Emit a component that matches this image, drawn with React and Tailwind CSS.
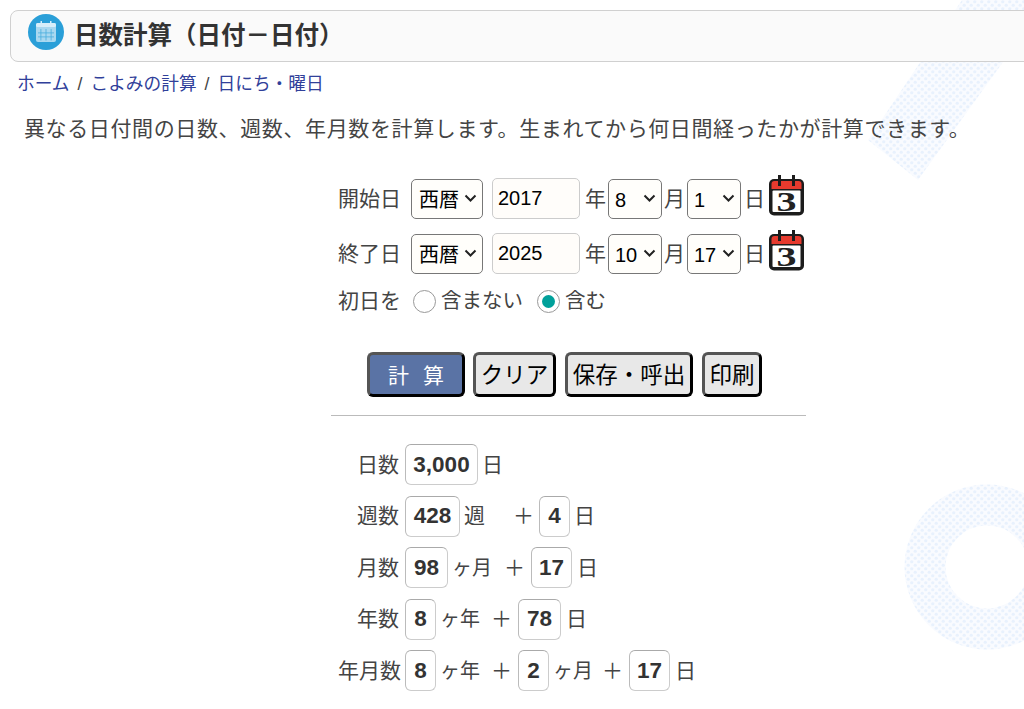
import React from "react";

const CalendarIcon = () => (
  <svg width="37" height="41" viewBox="0 0 37 41" className="shrink-0">
    <rect x="1" y="4" width="35" height="36.500" rx="5" fill="#1c1c1c" />
    <path d="M3.500 14V9a3 3 0 0 1 3-3h24a3 3 0 0 1 3 3v5z" fill="#e63a2e" />
    <rect x="4.500" y="15.500" width="28" height="21.500" rx="1" fill="#fff" />
    <rect x="10" y="0" width="3" height="11" fill="#1c1c1c" />
    <rect x="24" y="0" width="3" height="11" fill="#1c1c1c" />
    <text x="18.500" y="35.500" textAnchor="middle" fontSize="27" fontWeight="700" fill="#222" textLength="20" lengthAdjust="spacingAndGlyphs" fontFamily="'Liberation Serif', serif">3</text>
  </svg>
);

const TitleIcon = () => (
  <svg width="36" height="36" viewBox="0 0 36 36" className="shrink-0">
    <circle cx="18" cy="18" r="18" fill="#2a9fd8" />
    <rect x="8" y="9" width="20" height="19" rx="2" fill="#a9d8f0" />
    <rect x="8" y="9" width="20" height="4" rx="1.500" fill="#d7eefa" />
    <g fill="#2a9fd8" opacity="0.75">
      <rect x="12.500" y="15" width="0.800" height="11.500" />
      <rect x="17.600" y="15" width="0.800" height="11.500" />
      <rect x="22.700" y="15" width="0.800" height="11.500" />
      <rect x="10" y="18.500" width="16" height="0.800" />
      <rect x="10" y="22.500" width="16" height="0.800" />
    </g>
    <rect x="12.500" y="7" width="1.500" height="4" fill="#d7eefa" />
    <rect x="22" y="7" width="1.500" height="4" fill="#d7eefa" />
  </svg>
);

const Background = () => (
  <svg className="absolute inset-0" width="1024" height="709">
    <defs>
      <pattern id="dots" width="7" height="7" patternUnits="userSpaceOnUse">
        <rect width="7" height="7" fill="#f9fbff" />
        <circle cx="1.750" cy="1.750" r="1.600" fill="#e8f1fd" />
        <circle cx="5.250" cy="5.250" r="1.600" fill="#e8f1fd" />
      </pattern>
    </defs>
    <polygon points="962,0 868,140 918,180 1024,33 1024,0" fill="url(#dots)" />
    <circle cx="987" cy="567" r="62" fill="none" stroke="url(#dots)" strokeWidth="41" />
  </svg>
);

const DateSelect = ({ value, options, className }) => (
  <div className="relative">
    <select
      defaultValue={value}
      className={`block h-[40px] appearance-none rounded-[5px] border border-[#777] bg-[#fffefb] text-[20px] text-black ${className}`}
    >
      {options.map((o) => (
        <option key={o}>{o}</option>
      ))}
    </select>
    <svg width="13" height="8" viewBox="0 0 13 8" className="pointer-events-none absolute right-[6px] top-[15px]">
      <path d="M1.500 1.500 6.500 6.500 11.500 1.500" fill="none" stroke="#222" strokeWidth="2" />
    </svg>
  </div>
);

const DateRow = ({ label, year, month, day, className }) => (
  <div className={`flex items-center h-[41px] ${className}`}>
    <span className="w-[73px]">{label}</span>
    <DateSelect value="西暦" options={["西暦", "和暦"]} className="w-[72px] pl-[7px] pt-[3px]" />
    <input
      defaultValue={year}
      className="ml-[9px] h-[41px] w-[88px] rounded-[5px] border border-[#ccc] bg-[#fffdfa] pl-[5px] text-[20px] text-black outline-none"
    />
    <span className="ml-[5px] w-[23px]">年</span>
    <DateSelect value={month} options={[month]} className="w-[54px] pl-[6px] pt-[2px]" />
    <span className="ml-[2px] w-[23px]">月</span>
    <DateSelect value={day} options={[day]} className="w-[54px] pl-[6px] pt-[2px]" />
    <span className="ml-[3px] w-[24px]">日</span>
    <div className="-mt-[6px]">
      <CalendarIcon />
    </div>
  </div>
);

const Radio = ({ checked, label, className }) => (
  <div className={`flex items-center ${className}`}>
    <span className="flex size-[23px] items-center justify-center rounded-full border border-[#999] bg-white">
      {checked && <span className="size-[13px] rounded-full bg-[#00a09a]" />}
    </span>
    <span className="ml-[5px] text-[20.500px]">{label}</span>
  </div>
);

const Btn = ({ children, primary, className }) => (
  <button
    className={`h-[45px] rounded-[6px] border-[3px] border-t-[#555] border-l-[#555] border-r-black border-b-black leading-none ${
      primary ? "bg-[#5a73a5] text-white" : "bg-[#e8e8e8] text-black"
    } ${className}`}
  >
    {children}
  </button>
);

const Val = ({ children, className }) => (
  <span
    className={`flex h-[41px] items-center justify-center rounded-[6px] border border-[#ccc] border-t-[#aaa] border-l-[#bbb] bg-white text-[22.500px] font-bold text-[#333] ${className}`}
  >
    {children}
  </span>
);

const Result = ({ label, children }) => (
  <div className="flex h-[41px] items-center mb-[10.500px]">
    <span className="w-[61px] text-right whitespace-nowrap">{label}</span>
    <div className="ml-[6px] flex items-center">{children}</div>
  </div>
);

const Unit = ({ children }) => <span className="ml-[4px] text-[20px]">{children}</span>;

export default function App() {
  return (
    <div className="relative h-[709px] overflow-hidden bg-white text-[21px] text-[#444] [font-family:'Liberation_Sans','Noto_Sans_CJK_JP',sans-serif]">
      <Background />
      <div className="relative">
        <div className="ml-[10px] mt-[10px] flex h-[52px] w-[1030px] items-center rounded-[8px] border border-[#d0d0d0] bg-[#fafafa] pl-[17px]">
          <div className="-mt-[9px]">
            <TitleIcon />
          </div>
          <h1 className="ml-[10px] text-[24.500px] font-bold leading-none text-[#333]">日数計算（日付－日付）</h1>
        </div>

        <div className="ml-[17px] mt-[11px] flex h-[22px] items-center text-[17.700px] text-[#30409a]">
          <a>ホーム</a>
          <span className="mx-[8px] text-[#444]">/</span>
          <a>こよみの計算</a>
          <span className="mx-[8px] text-[#444]">/</span>
          <a>日にち・曜日</a>
        </div>

        <p className="ml-[24px] mt-[20px] h-[28px] leading-[28px] tracking-[0.620px] whitespace-nowrap">
          異なる日付間の日数、週数、年月数を計算します。生まれてから何日間経ったかが計算できます。
        </p>

        <div className="ml-[338px] mt-[35px] w-[490px]">
          <DateRow label="開始日" year="2017" month="8" day="1" />
          <DateRow label="終了日" year="2025" month="10" day="17" className="mt-[14px]" />
          <div className="mt-[7px] flex h-[40px] items-center">
            <span className="w-[75px]">初日を</span>
            <Radio label="含まない" />
            <Radio checked label="含む" className="ml-[14px]" />
          </div>

          <div className="mt-[31px] ml-[29px] flex">
            <Btn primary className="w-[98px] pl-[14px] pt-[1px] text-[21px] tracking-[14px]">計算</Btn>
            <Btn className="ml-[8px] w-[83px] pt-[3px] text-[22.500px]">クリア</Btn>
            <Btn className="ml-[9px] w-[128px] pt-[3px] text-[22.500px]">保存・呼出</Btn>
            <Btn className="ml-[9px] w-[60px] pt-[3px] text-[22.500px]">印刷</Btn>
          </div>

          <hr className="-ml-[7px] mt-[18px] w-[475px] border-t border-[#bbb]" />

          <div className="mt-[28px]">
            <Result label="日数">
              <Val className="w-[73px]">3,000</Val>
              <span className="ml-[4px]">日</span>
            </Result>
            <Result label="週数">
              <Val className="w-[55px]">428</Val>
              <span className="ml-[4px]">週</span>
              <span className="ml-[28px]">＋</span>
              <Val className="ml-[5px] w-[31px]">4</Val>
              <span className="ml-[4px]">日</span>
            </Result>
            <Result label="月数">
              <Val className="w-[43px]">98</Val>
              <Unit>ヶ月</Unit>
              <span className="ml-[12px]">＋</span>
              <Val className="ml-[6px] w-[41px]">17</Val>
              <span className="ml-[5px]">日</span>
            </Result>
            <Result label="年数">
              <Val className="w-[31px]">8</Val>
              <Unit>ヶ年</Unit>
              <span className="ml-[11px]">＋</span>
              <Val className="ml-[6px] w-[43px]">78</Val>
              <span className="ml-[5px]">日</span>
            </Result>
            <Result label="年月数">
              <Val className="w-[31px]">8</Val>
              <Unit>ヶ年</Unit>
              <span className="ml-[11px]">＋</span>
              <Val className="ml-[6px] w-[31px]">2</Val>
              <Unit>ヶ月</Unit>
              <span className="ml-[9px]">＋</span>
              <Val className="ml-[6px] w-[41px]">17</Val>
              <span className="ml-[5px]">日</span>
            </Result>
          </div>
        </div>
      </div>
    </div>
  );
}
